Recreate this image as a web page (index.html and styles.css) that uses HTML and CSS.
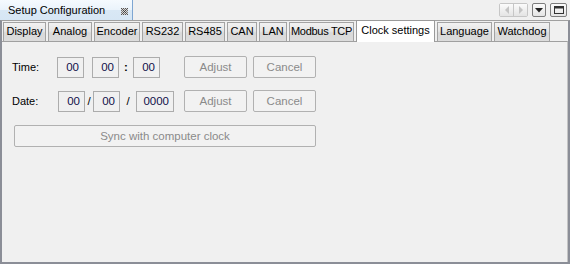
FILE: index.html
```html
<!DOCTYPE html>
<html>
<head>
<meta charset="utf-8">
<link rel="stylesheet" href="styles.css">
</head>
<body>
<div class="window">
  <div class="topbar">
    <div class="doc-tab">
      <span class="doc-title">Setup Configuration</span>
      <svg class="close" width="7" height="7" viewBox="0 0 7 7">
        <rect x="0" y="0" width="7" height="7" fill="#d8d8d8"/>
        <rect x="0" y="0" width="1" height="1" fill="#555"/><rect x="2" y="0" width="1" height="1" fill="#555"/><rect x="4" y="0" width="1" height="1" fill="#555"/><rect x="6" y="0" width="1" height="1" fill="#555"/>
        <rect x="1" y="1" width="1" height="1" fill="#555"/><rect x="3" y="1" width="1" height="1" fill="#777"/><rect x="5" y="1" width="1" height="1" fill="#555"/>
        <rect x="0" y="2" width="1" height="1" fill="#777"/><rect x="2" y="2" width="1" height="1" fill="#444"/><rect x="4" y="2" width="1" height="1" fill="#444"/><rect x="6" y="2" width="1" height="1" fill="#777"/>
        <rect x="1" y="3" width="1" height="1" fill="#777"/><rect x="3" y="3" width="1" height="1" fill="#333"/><rect x="5" y="3" width="1" height="1" fill="#777"/>
        <rect x="0" y="4" width="1" height="1" fill="#777"/><rect x="2" y="4" width="1" height="1" fill="#444"/><rect x="4" y="4" width="1" height="1" fill="#444"/><rect x="6" y="4" width="1" height="1" fill="#777"/>
        <rect x="1" y="5" width="1" height="1" fill="#555"/><rect x="3" y="5" width="1" height="1" fill="#777"/><rect x="5" y="5" width="1" height="1" fill="#555"/>
        <rect x="0" y="6" width="1" height="1" fill="#555"/><rect x="2" y="6" width="1" height="1" fill="#555"/><rect x="4" y="6" width="1" height="1" fill="#555"/><rect x="6" y="6" width="1" height="1" fill="#555"/>
      </svg>
    </div>
    <div class="spacer"></div>
    <div class="ctrls">
      <div class="ctrl-pair">
        <div class="ctrl half">
          <svg width="6" height="8" viewBox="0 0 6 8"><polygon points="5,0 5,8 1,4" fill="#c4c4c4"/></svg>
        </div>
        <div class="ctrl half right">
          <svg width="6" height="8" viewBox="0 0 6 8"><polygon points="1,0 1,8 5,4" fill="#c4c4c4"/></svg>
        </div>
      </div>
      <div class="ctrl single">
        <svg width="8" height="5" viewBox="0 0 8 5"><polygon points="0,0 8,0 4,4.5" fill="#222"/></svg>
      </div>
      <div class="ctrl single wide">
        <svg width="10" height="8" viewBox="0 0 10 8"><rect x="0.5" y="0.5" width="9" height="7" fill="none" stroke="#333"/><rect x="0.5" y="0.5" width="9" height="2" fill="#333"/></svg>
      </div>
    </div>
  </div>
  <div class="frame">
    <div class="tabs">
      <div class="tab t-display">Display</div>
      <div class="tab t-analog">Analog</div>
      <div class="tab t-encoder">Encoder</div>
      <div class="tab t-rs232">RS232</div>
      <div class="tab t-rs485">RS485</div>
      <div class="tab t-can">CAN</div>
      <div class="tab t-lan">LAN</div>
      <div class="tab t-modbus">Modbus TCP</div>
      <div class="tab active t-clock">Clock settings</div>
      <div class="tab t-lang">Language</div>
      <div class="tab t-watch">Watchdog</div>
    </div>
    <div class="panel">
      <div class="row row-time">
        <div class="label">Time:</div>
        <div class="field">00</div>
        <div class="sep s1"></div>
        <div class="field">00</div>
        <div class="sep s2">:</div>
        <div class="field">00</div>
        <div class="btn adjust">Adjust</div>
        <div class="btn cancel">Cancel</div>
      </div>
      <div class="row row-date">
        <div class="label">Date:</div>
        <div class="field">00</div>
        <div class="sep s3">/</div>
        <div class="field">00</div>
        <div class="sep s4">/</div>
        <div class="field year">0000</div>
        <div class="btn adjust">Adjust</div>
        <div class="btn cancel">Cancel</div>
      </div>
      <div class="btn sync">Sync with computer clock</div>
    </div>
  </div>
</div>
</body>
</html>
```

FILE: styles.css
```css
html, body {
  margin: 0;
  padding: 0;
  background: #f0f0f0;
}
body {
  font-family: "Liberation Sans", Arial, sans-serif;
  font-size: 11px;
  color: #000;
}
.window {
  width: 570px;
  height: 264px;
  display: flex;
  flex-direction: column;
  box-sizing: border-box;
}
.topbar {
  height: 20px;
  display: flex;
  align-items: stretch;
  flex: none;
}
.doc-tab {
  width: 133px;
  box-sizing: border-box;
  background: linear-gradient(#f5fafe, #eaf3fb 50%, #d9e8f5 51%, #d6e6f4);
  border-right: 1px solid #7ea6d2;
  display: flex;
  align-items: center;
  position: relative;
}
.doc-title {
  font-size: 11px;
  padding-left: 8px;
}
.close {
  position: absolute;
  left: 121px;
  top: 8px;
}
.spacer { flex: 1; }
.ctrls {
  display: flex;
  align-items: flex-start;
  padding-top: 3px;
  padding-right: 3px;
}
.ctrl-pair {
  display: flex;
  border: 1px solid #c6c6c6;
  border-radius: 2px;
  height: 12px;
  margin-right: 4px;
}
.ctrl {
  display: flex;
  align-items: center;
  justify-content: center;
  background: linear-gradient(#fbfbfb, #e4e4e4);
}
.half { width: 13px; height: 12px; }
.half.right { border-left: 1px solid #c6c6c6; }
.single {
  width: 12px;
  height: 12px;
  border: 1px solid #7d7d7d;
  border-radius: 2px;
  margin-right: 4px;
}
.single.wide { width: 15px; margin-right: 0; }
.frame {
  flex: 1;
  display: flex;
  flex-direction: column;
  border-left: 2px solid #8b8e97;
  border-right: 2px solid #8b8e97;
  border-bottom: 2px solid #8b8e97;
  border-top: 1px solid #a0a0a0;
  background: #f0f0f0;
}
.tabs {
  display: flex;
  gap: 2px;
  padding-left: 1px;
  height: 20px;
  align-items: flex-end;
  position: relative;
  z-index: 1;
}
.tab {
  flex: none;
  height: 19px;
  box-sizing: border-box;
  border: 1px solid #a3a3a3;
  border-bottom: none;
  background: linear-gradient(#f2f2f2, #e6e6e6 45%, #d9d9d9 55%, #dcdcdc);
  padding-top: 2px;
  text-align: center;
  font-size: 11px;
  white-space: nowrap;
}
.t-display { width: 43px; }
.t-analog { width: 44px; }
.t-encoder { width: 46px; }
.t-rs232 { width: 41px; }
.t-rs485 { width: 40px; }
.t-can { width: 30px; }
.t-lan { width: 28px; }
.t-modbus { width: 65px; letter-spacing: -0.3px; }
.t-clock { width: 79px; }
.t-lang { width: 55px; }
.t-watch { width: 56px; }
.tab.active {
  height: 22px;
  background: #ffffff;
  margin-bottom: -1px;
  padding-top: 3px;
  border-color: #9a9a9a;
}
.panel {
  flex: 1;
  border-top: 1px solid #a0a0a0;
  border-right: 1px solid #c4c4c4;
  padding: 14px 0 0 10px;
}
.row {
  display: flex;
  align-items: center;
  height: 22px;
}
.row > * { flex: none; }
.row-date { margin-top: 12px; }
.label {
  width: 45px;
}
.row-date .label { width: 46px; }
.field {
  width: 27px;
  height: 21px;
  box-sizing: border-box;
  border: 1px solid #acacac;
  text-align: right;
  padding-right: 4px;
  line-height: 19px;
  color: #10104a;
  font-size: 11.5px;
}
.field.year { width: 38px; }
.sep {
  text-align: center;
  font-size: 11.5px;
}
.s1 { width: 8px; }
.s2 { width: 14px; font-weight: bold; }
.s3 { width: 8px; }
.s4 { width: 16px; }
.btn {
  height: 22px;
  box-sizing: border-box;
  border: 1px solid #b1b1b1;
  border-radius: 2px;
  background: #f2f2f2;
  color: #8a8a8a;
  display: flex;
  align-items: center;
  justify-content: center;
  font-size: 11.5px;
}
.adjust { width: 63px; }
.row-time .adjust { margin-left: 24px; }
.row-date .adjust { margin-left: 10px; }
.cancel { width: 63px; margin-left: 6px; }
.sync {
  width: 302px;
  margin-left: 2px;
  margin-top: 13px;
}
```
